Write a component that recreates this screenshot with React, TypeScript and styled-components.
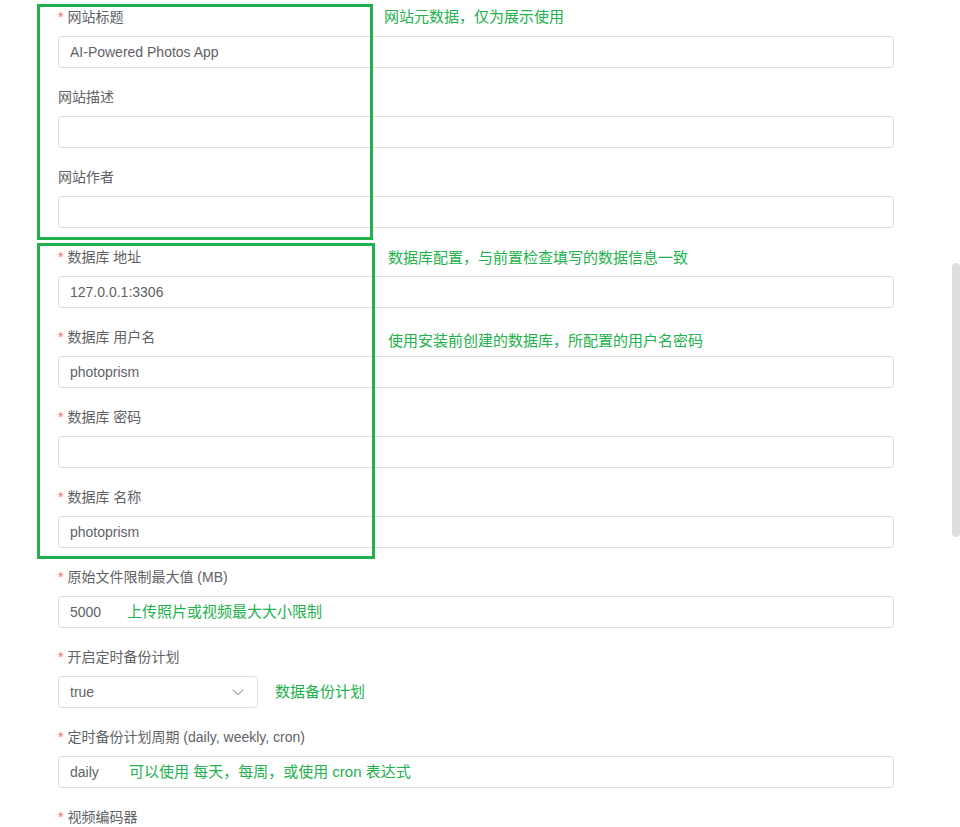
import React from 'react';
import styled, { createGlobalStyle } from 'styled-components';

const GlobalStyle = createGlobalStyle`
  html, body {
    margin: 0;
    padding: 0;
    background: #ffffff;
    overflow: hidden;
  }
  body {
    font-family: "Liberation Sans", "Noto Sans CJK SC", sans-serif;
  }
`;

const Page = styled.div`
  width: 960px;
  height: 827px;
  overflow: hidden;
  position: relative;
  background: #ffffff;
`;

const Form = styled.div`
  display: flex;
  flex-direction: column;
  padding: 6px 66px 0 58px;
`;

const Group = styled.div`
  position: relative;
  display: flex;
  flex-direction: column;
`;

// hand drawn annotation box from the screenshot
const Outline = styled.div<{ $top: number; $width: number; $height: number }>`
  position: absolute;
  z-index: 2;
  left: -21px;
  top: ${(p) => p.$top}px;
  width: ${(p) => p.$width}px;
  height: ${(p) => p.$height}px;
  box-sizing: border-box;
  border: 3px solid #22b14c;
  pointer-events: none;
`;

const Item = styled.div`
  position: relative;
  display: flex;
  flex-direction: column;
  margin-bottom: 18px;
`;

const Label = styled.div`
  height: 22px;
  line-height: 22px;
  margin-bottom: 8px;
  font-size: 14px;
  color: #606266;
  white-space: nowrap;
`;

const Star = styled.span`
  color: #f56c6c;
  margin-right: 4px;
`;

const Note = styled.span`
  font-size: 15px;
  line-height: 22px;
  color: #22b14c;
  white-space: nowrap;
`;

const SideNote = styled(Note)<{ $left: number; $top: number }>`
  position: absolute;
  left: ${(p) => p.$left}px;
  top: ${(p) => p.$top}px;
`;

const Input = styled.div`
  position: relative;
  height: 32px;
  box-sizing: border-box;
  border: 1px solid #dcdfe6;
  border-radius: 4px;
  padding: 0 11px;
  display: flex;
  align-items: center;
  font-size: 14px;
  color: #606266;
  background: #ffffff;
`;

const InlineNote = styled(Note)<{ $left: number }>`
  position: absolute;
  left: ${(p) => p.$left}px;
  top: 4px;
`;

const SelectRow = styled.div`
  display: flex;
  align-items: center;
  gap: 17px;
`;

const Select = styled(Input)`
  width: 200px;
  justify-content: space-between;
  padding-right: 12px;
`;

const Scrollbar = styled.div`
  position: absolute;
  right: 0;
  top: 263px;
  width: 8px;
  height: 274px;
  border-radius: 4px;
  background: #dddee1;
`;

const Chevron = () => (
  <svg width="14" height="14" viewBox="0 0 14 14" fill="none">
    <path d="M2 5l5 4.5L12 5" stroke="#a8abb2" strokeWidth="1.1" strokeLinecap="round" strokeLinejoin="round" />
  </svg>
);

type Field = { label: string; required?: boolean; value?: string };

const metaFields: Field[] = [
  { label: '网站标题', required: true, value: 'AI-Powered Photos App' },
  { label: '网站描述' },
  { label: '网站作者' },
];

const dbFields: Field[] = [
  { label: '数据库 地址', required: true, value: '127.0.0.1:3306' },
  { label: '数据库 用户名', required: true, value: 'photoprism' },
  { label: '数据库 密码', required: true },
  { label: '数据库 名称', required: true, value: 'photoprism' },
];

const FieldLabel = ({ f }: { f: Field }) => (
  <Label>
    {f.required && <Star>*</Star>}
    {f.label}
  </Label>
);

const App = () => {
  return (
    <Page>
      <GlobalStyle />
      <Form>
        <Group>
          <Outline $top={-2} $width={336} $height={236} />
          {metaFields.map((f, i) => (
            <Item key={f.label}>
              <FieldLabel f={f} />
              <Input>{f.value}</Input>
              {i === 0 && <SideNote $left={326} $top={0}>网站元数据，仅为展示使用</SideNote>}
            </Item>
          ))}
        </Group>

        <Group>
          <Outline $top={-3} $width={338} $height={316} />
          {dbFields.map((f, i) => (
            <Item key={f.label}>
              <FieldLabel f={f} />
              <Input>{f.value}</Input>
              {i === 0 && <SideNote $left={330} $top={1}>数据库配置，与前置检查填写的数据信息一致</SideNote>}
              {i === 1 && <SideNote $left={330} $top={4}>使用安装前创建的数据库，所配置的用户名密码</SideNote>}
            </Item>
          ))}
        </Group>

        <Item>
          <FieldLabel f={{ label: '原始文件限制最大值 (MB)', required: true }} />
          <Input>
            5000
            <InlineNote $left={68}>上传照片或视频最大大小限制</InlineNote>
          </Input>
        </Item>

        <Item>
          <FieldLabel f={{ label: '开启定时备份计划', required: true }} />
          <SelectRow>
            <Select>
              true
              <Chevron />
            </Select>
            <Note>数据备份计划</Note>
          </SelectRow>
        </Item>

        <Item>
          <FieldLabel f={{ label: '定时备份计划周期 (daily, weekly, cron)', required: true }} />
          <Input>
            daily
            <InlineNote $left={70}>可以使用 每天，每周，或使用 cron 表达式</InlineNote>
          </Input>
        </Item>

        <Item>
          <FieldLabel f={{ label: '视频编码器', required: true }} />
          <Input />
        </Item>
      </Form>
      <Scrollbar />
    </Page>
  );
};

export default App;
